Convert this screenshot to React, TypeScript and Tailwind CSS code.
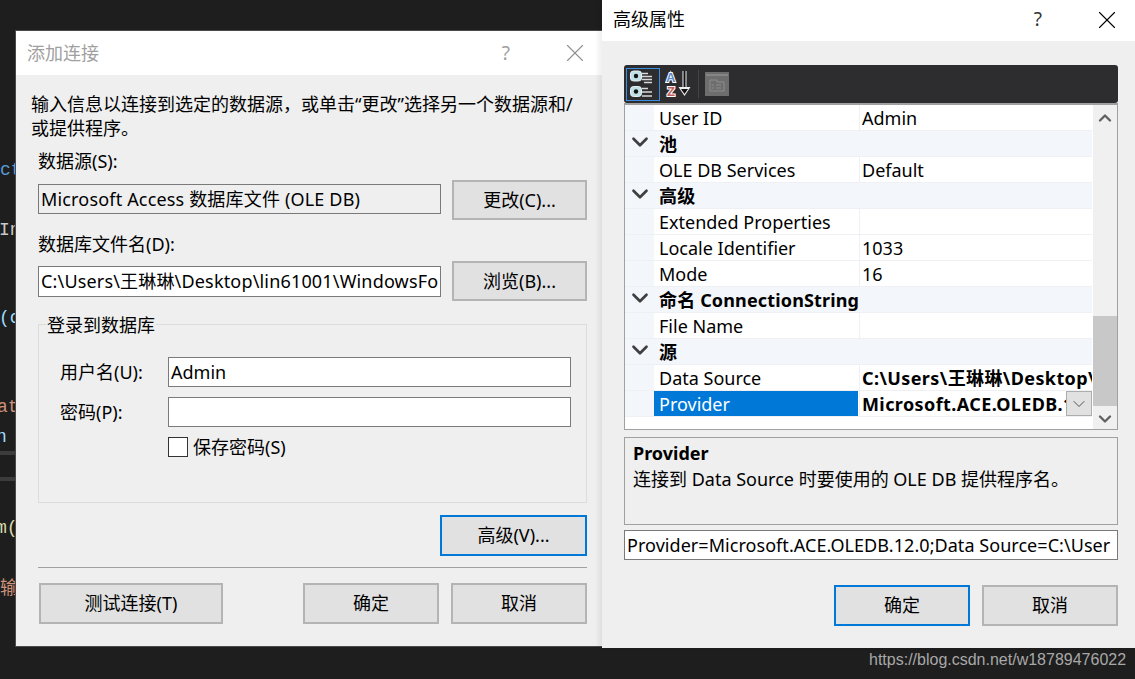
import { ChevronDown, ChevronUp, X } from 'lucide-react';
import type { ReactNode } from 'react';

const font = 'font-["Noto_Sans","Noto_Sans_CJK_SC",sans-serif]';

function Btn({ children, className, focus }: { children: ReactNode; className: string; focus?: boolean }) {
  return (
    <button
      className={`flex items-center justify-center bg-[#e1e1e1] text-[18px] text-black border-2 ${
        focus ? 'border-[#0078d7]' : 'border-[#b4b4b4]'
      } ${className}`}
    >
      {children}
    </button>
  );
}

function Field({ children, className }: { children?: ReactNode; className: string }) {
  return (
    <div className={`flex items-center overflow-hidden whitespace-nowrap border border-[#7a7a7a] bg-white pl-[2px] text-[18px] text-black ${className}`}>
      {children}
    </div>
  );
}

function TitleBar({ title, dim, className }: { title: string; dim?: boolean; className: string }) {
  return (
    <div className={`flex items-center bg-white pl-[11px] pr-[13px] ${className}`}>
      <span className={`text-[18px] ${dim ? 'text-[#a0a0a0]' : 'text-black'}`}>{title}</span>
      <span className={`ml-auto text-[19px] ${dim ? 'text-[#a0a0a0]' : 'text-[#333]'}`}>?</span>
      <X size={30} strokeWidth={0.9} className={`ml-[50px] ${dim ? 'text-[#909090]' : 'text-black'}`} />
    </div>
  );
}

function AddConnection() {
  return (
    <div className="absolute left-[16px] top-[31px] flex h-[615px] w-[587px] flex-col bg-[#efefef] shadow-[0_0_0_1px_#4a4a4a]">
      <TitleBar title="添加连接" dim className="h-[44px]" />

      <div className="flex flex-col pl-[22px] pr-[16px]">
        <div className="-ml-[7px] mt-[17px] text-[18px] leading-[24px] text-black">
          <div className="whitespace-nowrap">输入信息以连接到选定的数据源，或单击“更改”选择另一个数据源和/</div>
          <div>或提供程序。</div>
        </div>

        <div className="mt-[9px] text-[18px] leading-[24px] text-black">数据源(S):</div>
        <div className="mt-[7px] flex items-center">
          <div className="mb-[2px] flex h-[30px] w-[403px] items-center overflow-hidden whitespace-nowrap border border-[#7a7a7a] bg-[#efefef] pl-[2px] text-[18px] tracking-[0.17px] text-black">
            Microsoft Access 数据库文件 (OLE DB)
          </div>
          <Btn className="ml-[11px] h-[40px] w-[135px]">更改(C)...</Btn>
        </div>

        <div className="mt-[12px] text-[18px] leading-[24px] text-black">数据库文件名(D):</div>
        <div className="mt-[5px] flex items-center">
          <Field className="h-[31px] w-[403px] tracking-[0.17px]">C:\Users\王琳琳\Desktop\lin61001\WindowsFo</Field>
          <Btn className="ml-[11px] h-[40px] w-[135px]">浏览(B)...</Btn>
        </div>

        <div className="relative mt-[23px] h-[179px] border border-[#dcdcdc] pl-[21px] pt-[32px]">
          <span className="absolute left-[7px] top-[-12px] bg-[#efefef] px-[1px] text-[18px] leading-[24px] text-black">登录到数据库</span>
          <div className="flex items-center">
            <span className="w-[108px] text-[18px] text-black">用户名(U):</span>
            <Field className="h-[30px] w-[403px]">Admin</Field>
          </div>
          <div className="mt-[10px] flex items-center">
            <span className="w-[108px] text-[18px] text-black">密码(P):</span>
            <Field className="h-[30px] w-[403px]" />
          </div>
          <div className="ml-[108px] mt-[10px] flex h-[20px] items-center">
            <span className="h-[20px] w-[20px] border border-[#333] bg-white" />
            <span className="ml-[5px] text-[18px] text-black">保存密码(S)</span>
          </div>
        </div>

        <div className="mt-[12px] flex justify-end">
          <Btn focus className="h-[41px] w-[147px]">高级(V)...</Btn>
        </div>
        <div className="mt-[11px] h-[1px] bg-[#a0a0a0]" />
        <div className="ml-[1px] mt-[15px] flex">
          <Btn className="h-[41px] w-[184px]">测试连接(T)</Btn>
          <Btn className="ml-[80px] h-[41px] w-[136px]">确定</Btn>
          <Btn className="ml-[12px] h-[41px] w-[136px]">取消</Btn>
        </div>
      </div>
    </div>
  );
}

type Row = { name: string; value?: string; group?: boolean; boldValue?: boolean; selected?: boolean };

const rows: Row[] = [
  { name: 'User ID', value: 'Admin' },
  { name: '池', group: true },
  { name: 'OLE DB Services', value: 'Default' },
  { name: '高级', group: true },
  { name: 'Extended Properties' },
  { name: 'Locale Identifier', value: '1033' },
  { name: 'Mode', value: '16' },
  { name: '命名 ConnectionString', group: true },
  { name: 'File Name' },
  { name: '源', group: true },
  { name: 'Data Source', value: 'C:\\Users\\王琳琳\\Desktop\\lin61001', boldValue: true },
  { name: 'Provider', value: 'Microsoft.ACE.OLEDB.12.0', boldValue: true, selected: true },
];

function PropRow({ row }: { row: Row }) {
  if (row.group) {
    return (
      <div className="flex h-[26px] items-center border-b border-[#eef0f4] bg-[#f3f6fb] pt-[1px]">
        <div className="mb-[5px] flex w-[29px] justify-center">
          <ChevronDown size={26} strokeWidth={2.5} className="shrink-0 text-[#404040]" />
        </div>
        <span className="whitespace-nowrap pl-[5px] text-[18px] font-bold tracking-[0.15px] text-black">{row.name}</span>
      </div>
    );
  }
  return (
    <div className="flex h-[26px] border-b border-[#eef0f4]">
      <div className="w-[29px] bg-[#f3f6fb]" />
      <div
        className={`flex w-[204px] items-center pl-[5px] pt-[1px] text-[18px] ${
          row.selected ? 'bg-[#0078d7] text-white' : 'text-black'
        }`}
      >
        {row.name}
      </div>
      <div className="relative ml-[1px] flex min-w-0 flex-1 items-center overflow-hidden whitespace-nowrap border-l border-[#eef0f4] pl-[2px] pt-[1px] text-[18px] text-black">
        <span className={row.boldValue ? 'font-bold tracking-[0.4px]' : ''}>{row.value}</span>
        {row.selected && (
          <span className="absolute right-0 top-0 flex h-[25px] w-[26px] items-center justify-center border border-[#adadad] bg-[#e1e1e1]">
            <ChevronDown size={20} strokeWidth={1.1} className="text-[#444]" />
          </span>
        )}
      </div>
    </div>
  );
}

function CategoryIcon() {
  return (
    <svg width="28" height="28" viewBox="0 0 28 28">
      <rect x="1.500" y="1" width="11" height="10" rx="3" fill="#bfe0e6" stroke="#e8f0f2" />
      <rect x="1.500" y="16.500" width="11" height="10" rx="3" fill="#bfe0e6" stroke="#e8f0f2" />
      <circle cx="7" cy="6" r="2.200" fill="#111" />
      <circle cx="7" cy="21.500" r="2.200" fill="#111" />
      <path d="M13 3.500h6M13 6.500h10M13 9.500h10M15 12.500h8M13 18.500h6M13 22h10M13 26h10" stroke="#d8d8d8" strokeWidth="1.400" />
    </svg>
  );
}

function SortIcon() {
  return (
    <svg width="27" height="28" viewBox="0 0 27 28">
      <text x="1" y="12" fontFamily="Liberation Sans" fontSize="13" fontWeight="700" fill="#5b86c9" stroke="#fff" strokeWidth="2" paintOrder="stroke">A</text>
      <text x="2" y="26" fontFamily="Liberation Sans" fontSize="13" fontWeight="700" fill="#c25b5b" stroke="#fff" strokeWidth="2" paintOrder="stroke">Z</text>
      <path d="M19.500 1v19" stroke="#f0f0f0" strokeWidth="4" />
      <path d="M19.500 1v19" stroke="#111" strokeWidth="2" />
      <path d="M13.500 17h12l-6 9z" fill="#f0f0f0" />
      <path d="M16 19h7l-3.500 5z" fill="#111" />
    </svg>
  );
}

function PagesIcon() {
  return (
    <svg width="24" height="24" viewBox="0 0 24 24">
      <rect width="24" height="24" fill="#6e6e6e" />
      <path d="M1 3h22" stroke="#858585" strokeWidth="2" />
      <path d="M5 8h7v2h7v9H5z" fill="none" stroke="#8c8c8c" strokeWidth="1" />
      <path d="M7 13h2M7 16h2M11 13h5M11 16h5" stroke="#8c8c8c" strokeWidth="1" />
    </svg>
  );
}

function AdvancedProperties() {
  return (
    <div className="absolute left-[602px] top-0 flex h-[648px] w-[533px] flex-col bg-[#efefef] shadow-[-4px_0_4px_rgba(0,0,0,0.06)]">
      <TitleBar title="高级属性" className="h-[41px] pb-[2px]" />

      <div className="ml-[22px] mt-[24px] w-[494px]">
        <div className="flex h-[38px] items-center rounded-[3px] bg-[#2d2d30] pl-[2px]">
          <span className="flex h-[33px] w-[34px] items-center justify-center border border-[#3c8fe0]">
            <CategoryIcon />
          </span>
          <span className="ml-[3px] flex w-[30px] items-center justify-center">
            <SortIcon />
          </span>
          <span className="ml-[5px] h-[28px] w-[1px] bg-[#444]" />
          <span className="ml-[6px]">
            <PagesIcon />
          </span>
        </div>

        <div className="flex h-[327px] border border-t-2 border-[#a0a0a0] bg-white">
          <div className="w-[467px] min-w-0">
            {rows.map((row) => (
              <PropRow key={row.name} row={row} />
            ))}
          </div>
          <div className="ml-[1px] flex w-[24px] flex-col items-center bg-[#f0f0f0]">
            <ChevronUp size={20} strokeWidth={2.8} className="mt-[3px] shrink-0 text-[#606060]" />
            <div className="mt-[188px] h-[90px] w-[24px] shrink-0 bg-[#c8c8c8]" />
            <ChevronDown size={20} strokeWidth={2.8} className="mt-[3px] shrink-0 text-[#606060]" />
          </div>
        </div>

        <div className="mt-[7px] h-[88px] border border-[#a0a0a0] pl-[8px] pt-[3px] text-black">
          <div className="text-[18px] font-bold leading-[24px]">Provider</div>
          <div className="text-[18px] leading-[28px]">连接到 Data Source 时要使用的 OLE DB 提供程序名。</div>
        </div>

        <Field className="mt-[5px] h-[30px] w-[494px] tracking-[0.05px]">Provider=Microsoft.ACE.OLEDB.12.0;Data Source=C:\User</Field>

        <div className="mt-[25px] flex justify-end">
          <Btn focus className="h-[41px] w-[136px]">确定</Btn>
          <Btn className="ml-[12px] h-[41px] w-[136px]">取消</Btn>
        </div>
      </div>
    </div>
  );
}

const codeBits = [
  { t: 'ct', pos: 'left-0 top-[158px]', c: 'text-[#569cd6]' },
  { t: 'In', pos: '-left-[1px] top-[218px]', c: 'text-[#c8c8c8]' },
  { t: '(o', pos: '-left-[1px] top-[306px]', c: 'text-[#9cdcfe]' },
  { t: 'at', pos: '-left-[3px] top-[395px]', c: 'text-[#ce9178]' },
  { t: 'n', pos: '-left-[4px] top-[425px]', c: 'text-[#9cdcfe]' },
  { t: 'm(', pos: '-left-[4px] top-[516px]', c: 'text-[#dcdcaa]' },
  { t: '输', pos: 'left-0 top-[577px]', c: 'text-[#ce9178]' },
];

export default function App() {
  return (
    <div className={`relative h-[679px] w-[1135px] overflow-hidden bg-[#1e1e1e] ${font}`}>
      {codeBits.map((b) => (
        <span key={b.t} className={`absolute font-['Liberation_Mono','Noto_Sans_CJK_SC',monospace] text-[18px] leading-[24px] ${b.pos} ${b.c}`}>
          {b.t}
        </span>
      ))}
      <div className="absolute left-0 top-[451px] h-[4px] w-[16px] bg-[#3c3c3c]" />
      <div className="absolute left-0 top-[477px] h-[4px] w-[16px] bg-[#3c3c3c]" />
      <AddConnection />
      <AdvancedProperties />
      <span className="absolute left-[869px] top-[651px] font-['Liberation_Sans',sans-serif] text-[16px] leading-[18px] text-[#a8a8a8]">
        https://blog.csdn.net/w18789476022
      </span>
    </div>
  );
}
